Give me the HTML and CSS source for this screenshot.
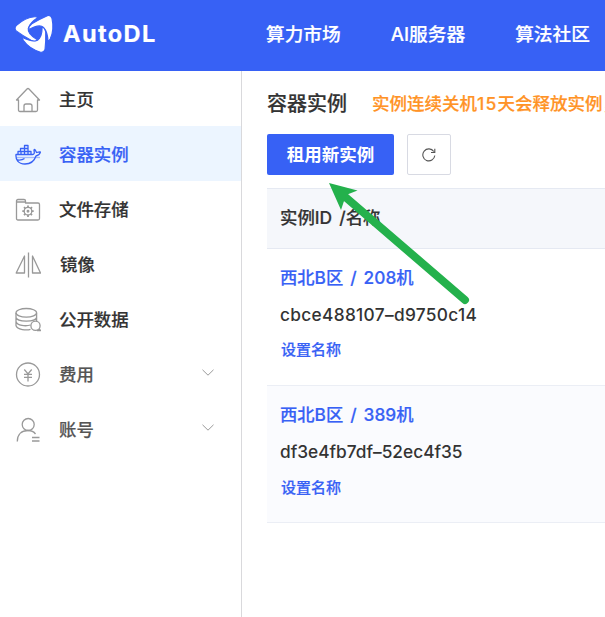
FILE: index.html
```html
<!DOCTYPE html>
<html lang="zh-CN">
<head>
<meta charset="utf-8">
<title>AutoDL</title>
<link rel="stylesheet" href="styles.css">
</head>
<body>
<header class="topbar">
  <div class="brand">
    <svg class="logo" viewBox="15 15 38 38" width="38" height="38" fill="#fff">
      <defs><path id="blade" d="M22.600 37.400Q31 41.700 36.800 40.400Q42.200 38.500 42.200 26.400Q45.300 28 45.700 32Q46 41 45 49.500Q44 52.800 40.500 52.200Q29 48.500 23.500 40.500Q22 38 22.600 37.400Z"/></defs>
      <g class="blades">
        <use href="#blade"/>
        <use href="#blade" transform="rotate(120 36 31.900)"/>
        <use href="#blade" transform="rotate(240 36.400 31.900)"/>
      </g>
    </svg>
    <span class="wordmark">AutoDL</span>
  </div>
  <nav class="topnav"><a>算力市场</a><a>AI服务器</a><a>算法社区</a></nav>
</header>
<div class="shell">
  <aside class="sidebar">
    <a class="item">
      <svg class="icon" viewBox="0 0 26 26"><path d="M1.500 13 12 2Q13 1 14 2L24.500 13H22.500V23Q22.500 24.500 21 24.500H17V19Q17 17 15 17H11Q9 17 9 19V24.500H5Q3.500 24.500 3.500 23V13ZM9 24.500H17"/></svg>
      <span>主页</span></a>
    <a class="item active">
      <svg class="icon" viewBox="0 0 26 26"><path d="M1 12.500H17.500Q20 12.500 19 8.500Q19 6.500 20.500 8.500L21.500 10.500Q25 9.500 25.500 10Q24.500 13.500 21 14C19 20 15 22 10 22C3 22 .5 17.500 1 12.500ZM3 12.500V9.500H16V12.500M5.500 9.500V6.500H13V3.500H9.500V12.500M13 6V12.500M6 9.500V12.500M2.500 18Q7 18.500 9.500 16.500"/><path class="faint" d="M1 15.500H25"/></svg>
      <span>容器实例</span></a>
    <a class="item">
      <svg class="icon" viewBox="0 0 26 26"><path d="M1.500 5V4Q1.500 2.500 3 2.500H9Q10.500 2.500 10.500 4V6H23Q24.500 6 24.500 7.500V21.500Q24.500 23 23 23H3Q1.500 23 1.500 21.500V5H10.500"/><circle cx="13" cy="14.200" r="3.800"/><circle cx="13" cy="14.200" r=".8"/><path class="teeth" d="M13 8.500V10.500M13 18V20M7.300 14.200H9.300M16.700 14.200H18.700M9 10.200 10.400 11.600M15.600 16.800 17 18.200M17 10.200 15.600 11.600M10.400 16.800 9 18.200"/></svg>
      <span>文件存储</span></a>
    <a class="item mirror">
      <svg class="icon" viewBox="0 0 26 26"><path d="M13.500 .5V25.500M9.500 4V21H1.200ZM17.500 4V21H25.500Z"/></svg>
      <span>镜像</span></a>
    <a class="item">
      <svg class="icon" viewBox="0 0 26 26"><ellipse cx="11.300" cy="5.800" rx="10.300" ry="4.300"/><path d="M1 6V18.500C2 23 12 23.500 15.500 22.300M21.600 6V14.500M1 10.500C2 15.300 20.600 15.300 21.600 10.500M1 14.500C2 18.800 11 19.500 15.500 18"/><circle cx="20.500" cy="18.800" r="4.600"/><path d="M22 23.500H25.500L24 21.800"/></svg>
      <span>公开数据</span></a>
    <a class="item sub">
      <svg class="icon" viewBox="0 0 26 26"><circle cx="13" cy="12.500" r="11.500"/><path d="M9.300 7.500 13 11.800 16.700 7.500M9 12.300H17M9 15.300H17M13 11.800V19.500"/></svg>
      <span>费用</span>
      <svg class="chevron" viewBox="0 0 12 7"><path d="M.5 .8 6 6.200 11.500 .8"/></svg></a>
    <a class="item sub">
      <svg class="icon" viewBox="0 0 26 26"><circle cx="13.200" cy="7.500" r="6"/><path d="M2.300 24.500C2.300 17 7 13.500 13 13.500Q18 13.500 20.500 17M17 20.500H24.500M17 24H24.500"/></svg>
      <span>账号</span>
      <svg class="chevron" viewBox="0 0 12 7"><path d="M.5 .8 6 6.200 11.500 .8"/></svg></a>
  </aside>
  <main class="content">
    <div class="heading"><h1>容器实例</h1><p>实例连续关机<span class="days">15</span>天会释放实例，</p></div>
    <div class="actions">
      <button class="rent">租用新实例</button>
      <button class="refresh"><svg viewBox="0 0 14 14" width="14" height="14"><path d="M12.800 7.500A6 6 0 1 1 11.800 3.500M12.800 .8V4.500H9"/></svg></button>
    </div>
    <section class="table">
      <div class="thead">实例ID /名称</div>
      <div class="row"><a class="region">西北B区 / 208机</a><span class="id">cbce488107–d9750c14</span><a class="rename">设置名称</a></div>
      <div class="row alt"><a class="region">西北B区 / 389机</a><span class="id id-short">df3e4fb7df–52ec4f35</span><a class="rename">设置名称</a></div>
    </section>
  </main>
</div>
<svg class="arrow" viewBox="325 180 150 130" width="150" height="130"><path class="shaft" d="M343 195 465 300"/><path class="head" d="M329 183 357.500 190.500 346 195 341 210Z"/></svg>
</body>
</html>
```
FILE: styles.css
```css
* { box-sizing: border-box; }
body {
  margin: 0;
  width: 605px;
  height: 617px;
  overflow: hidden;
  position: relative;
  background: #fff;
  color: #333;
  font-family: Inter, "Noto Sans CJK SC", sans-serif;
  font-weight: 500;
  -webkit-text-stroke: .2px currentColor;
}
.topbar { display: flex; height: 71px; background: #3761f5; color: #fff; overflow: hidden; }
.brand { display: flex; flex: 0 0 266px; padding: 15px 0 0 15px; gap: 11px; }
.logo { flex: none; overflow: visible; }
.blades { stroke: #3761f5; stroke-width: 1.100; }
.wordmark { font-size: 23.500px; font-weight: 700; line-height: 37px; letter-spacing: 1.400px; margin-left: -1px; }
.topnav { display: flex; gap: 50px; font-size: 18.700px; line-height: 70px; white-space: nowrap; }
.shell { display: flex; height: 546px; }
.sidebar { flex: 0 0 242px; border-right: 1px solid #d9d9dc; }
.item { display: flex; align-items: center; height: 55px; padding: 3px 27px 0 15px; font-size: 17.400px; line-height: 26px; }
.item span { margin-left: 18px; }
.item.mirror span { margin-left: 19px; }
.item.active { background: #ecf5ff; color: #3761f5; }
.item.sub { color: #555; }
.icon { width: 26px; height: 26px; fill: none; stroke: #999; stroke-width: 1.300; stroke-linejoin: round; }
.active .icon { stroke: #3761f5; }
.faint { opacity: .4; }
.teeth { stroke-width: 1.800; }
.chevron { width: 12px; height: 7px; margin: 0 0 6px auto; fill: none; stroke: #999; }
.content { flex: 1; min-width: 0; padding-left: 25px; overflow: hidden; }
.heading { display: flex; height: 63px; white-space: nowrap; line-height: 66px; }
.heading h1 { flex: none; margin: 0; width: 105px; font-size: 20px; font-weight: 500; }
.heading p { margin: 0; font-size: 17.500px; line-height: 66px; color: #ff9326; }
.days { letter-spacing: 1.200px; }
.actions { display: flex; gap: 13px; height: 54px; }
button { font: inherit; padding: 0; border-radius: 2px; height: 41px; }
.rent { width: 127px; border: 0; background: #3761f5; color: #fff; font-size: 17.500px; font-weight: 700; line-height: 41px; -webkit-text-stroke: 0; }
.refresh { width: 44px; border: 1px solid #d8dae3; background: #fff; display: grid; place-items: center; }
.refresh svg { fill: none; stroke: #555; stroke-width: 1.100; }
.thead { height: 61px; padding-left: 13px; border-top: 1px solid #e5e9f2; border-bottom: 1px solid #e5e9f2; background: #f5f7fb; font-size: 17.400px; line-height: 58px; word-spacing: 2.500px; }
.row { display: flex; flex-direction: column; height: 137px; padding: 10px 0 0 13px; border-bottom: 1px solid #ebeef5; white-space: nowrap; }
.row.alt { background: #fafbfe; }
.region { font-size: 17.300px; line-height: 37px; word-spacing: 2.400px; color: #3761f5; }
.id { font-size: 17.300px; line-height: 37px; letter-spacing: .32px; -webkit-text-stroke: 0; }
.id-short { letter-spacing: 0; }
.rename { padding-left: 1px; font-size: 15px; line-height: 34px; color: #3761f5; }
.alt .rename { line-height: 36px; }
.arrow { position: absolute; left: 325px; top: 180px; }
.shaft { fill: none; stroke: #24b14c; stroke-width: 8; stroke-linecap: round; }
.head { fill: #24b14c; }
```
